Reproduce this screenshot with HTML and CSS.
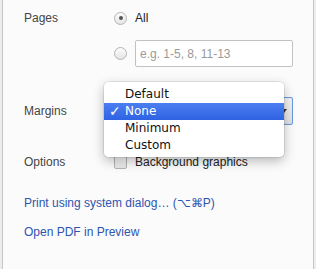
FILE: index.html
```html
<!DOCTYPE html>
<html>
<head>
  <meta charset="UTF-8">
  <meta name="viewport" content="width=device-width, initial-scale=1.0">
  <title>Print settings</title>
  <link rel="stylesheet" href="styles.css">
</head>
<body>
  <div class="panel">
    <div class="row row-pages">
      <span class="label">Pages</span>
      <div class="control">
        <span class="radio checked"></span>
        <span class="text">All</span>
      </div>
    </div>

    <div class="row row-range">
      <span class="label"></span>
      <div class="control">
        <span class="radio"></span>
        <input type="text" class="range-input" placeholder="e.g. 1-5, 8, 11-13">
      </div>
    </div>

    <div class="row row-margins">
      <span class="label">Margins</span>
      <div class="control">
        <div class="select">
          <span class="select-arrow"></span>
        </div>
      </div>
    </div>

    <div class="row row-options">
      <span class="label">Options</span>
      <div class="control">
        <span class="checkbox"></span>
        <span class="text">Background graphics</span>
      </div>
    </div>

    <a class="link link-print" href="#">Print using system dialog… (⌥⌘P)</a>
    <a class="link link-open" href="#">Open PDF in Preview</a>

    <!-- open dropdown of the margins select -->
    <ul class="menu">
      <li class="menu-item">Default</li>
      <li class="menu-item selected"><span class="check">✓</span>None</li>
      <li class="menu-item">Minimum</li>
      <li class="menu-item">Custom</li>
    </ul>
  </div>
</body>
</html>
```

FILE: styles.css
```css
body {
  margin: 0;
  background-color: #ededed;
  font-family: "Liberation Sans", Arial, sans-serif;
  font-size: 12px;
  color: #444;
}

.panel {
  position: relative;
  box-sizing: border-box;
  height: 269px;
  margin: 0 2px;
  padding-top: 11px;
  background-color: #fbfbfb;
  border-left: 1px solid #c6c6c6;
  border-right: 1px solid #c6c6c6;
  display: flex;
  flex-direction: column;
}

.row {
  display: grid;
  grid-template-columns: 90px 1fr;
  align-items: center;
  padding-left: 21px;
}

.control {
  display: flex;
  align-items: center;
}

.text {
  margin-left: 8px;
  color: #222;
}

.row-pages {
  height: 14px;
}

.row-range {
  margin-top: 15px;
  height: 27px;
}

.row-margins {
  margin-top: 30px;
  height: 28px;
}

.row-options {
  margin-top: 30px;
  height: 14px;
}

.radio {
  box-sizing: border-box;
  width: 13px;
  height: 13px;
  border-radius: 50%;
  border: 1px solid #b4b4b4;
  background: linear-gradient(#fdfdfd, #e4e4e4);
  display: flex;
  align-items: center;
  justify-content: center;
}

.radio.checked::after {
  content: "";
  width: 4px;
  height: 4px;
  border-radius: 50%;
  background-color: #555;
}

.range-input {
  box-sizing: border-box;
  width: 158px;
  height: 27px;
  margin-left: 8px;
  padding: 0 4px;
  border: 1px solid #c2c2c2;
  border-radius: 2px;
  background-color: #fff;
  font-family: "Liberation Sans", Arial, sans-serif;
  font-size: 12px;
  outline: none;
}

.range-input::placeholder {
  color: #9a9a9a;
}

.select {
  box-sizing: border-box;
  width: 179px;
  height: 28px;
  border: 1px solid #6b9be0;
  border-radius: 2px;
  background: linear-gradient(#f6f6f6, #e2e2e2);
  box-shadow: inset 0 0 1px #9fc0ee;
  display: flex;
  align-items: center;
  justify-content: flex-end;
  padding-right: 5px;
}

.select-arrow {
  width: 0;
  height: 0;
  border-left: 3px solid transparent;
  border-right: 3px solid transparent;
  border-top: 4px solid #333;
}

.checkbox {
  box-sizing: border-box;
  width: 13px;
  height: 14px;
  border: 1px solid #b4b4b4;
  border-radius: 2px;
  background: linear-gradient(#fdfdfd, #e6e6e6);
}

.link {
  display: block;
  margin-left: 21px;
  line-height: 16px;
  color: #2d55b0;
  text-decoration: none;
}

.link-print {
  margin-top: 26px;
}

.link-open {
  margin-top: 13px;
}

.menu {
  position: absolute;
  left: 101px;
  top: 82px;
  width: 180px;
  margin: 0;
  padding: 4px 0 3px;
  list-style: none;
  background-color: rgba(255, 255, 255, 0.98);
  border-radius: 5px;
  box-shadow: 0 0 0 1px rgba(0, 0, 0, 0.08), 0 4px 12px rgba(0, 0, 0, 0.28);
  font-family: "DejaVu Sans", sans-serif;
  font-size: 12px;
  color: #111;
}

.menu-item {
  position: relative;
  height: 17px;
  line-height: 17px;
  padding-left: 21px;
}

.menu-item.selected {
  background: linear-gradient(#4b7ff0, #2f62e2);
  color: #fff;
}

.check {
  position: absolute;
  left: 5px;
  top: 0;
  font-size: 14px;
  font-weight: bold;
}
```
